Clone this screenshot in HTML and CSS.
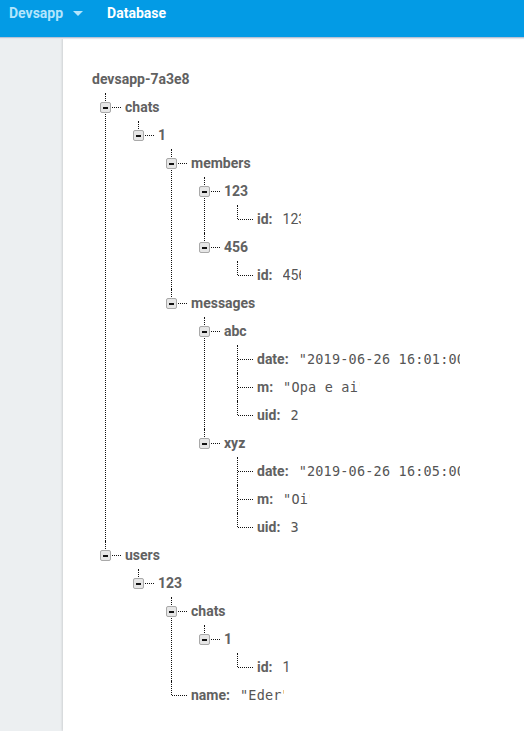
FILE: index.html
```html
<!DOCTYPE html>
<html lang="en">
<head>
    <meta charset="UTF-8">
    <meta name="viewport" content="width=device-width, initial-scale=1.0">
    <title>Devsapp - Database</title>
    <link rel="stylesheet" href="styles.css">
</head>
<body>
    <header class="topbar">
        <span class="project">Devsapp</span>
        <span class="caret"></span>
        <span class="section">Database</span>
    </header>
    <div class="layout">
        <aside class="sidebar"></aside>
        <main class="panel">
            <div class="tree">
                <div class="row root-row"><span class="key">devsapp-7a3e8</span></div>
                <ul>
                    <li>
                        <div class="row"><span class="toggle"></span><span class="key">chats</span></div>
                        <ul>
                            <li>
                                <div class="row"><span class="toggle"></span><span class="key">1</span></div>
                                <ul>
                                    <li>
                                        <div class="row"><span class="toggle"></span><span class="key">members</span></div>
                                        <ul>
                                            <li>
                                                <div class="row"><span class="toggle"></span><span class="key">123</span></div>
                                                <ul>
                                                    <li class="leaf"><div class="row"><span class="key">id:</span><span class="val num"><span>123</span></span></div></li>
                                                </ul>
                                            </li>
                                            <li>
                                                <div class="row"><span class="toggle"></span><span class="key">456</span></div>
                                                <ul>
                                                    <li class="leaf"><div class="row"><span class="key">id:</span><span class="val num"><span>456</span></span></div></li>
                                                </ul>
                                            </li>
                                        </ul>
                                    </li>
                                    <li>
                                        <div class="row"><span class="toggle"></span><span class="key">messages</span></div>
                                        <ul>
                                            <li>
                                                <div class="row"><span class="toggle"></span><span class="key">abc</span></div>
                                                <ul>
                                                    <li class="leaf"><div class="row"><span class="key">date:</span><span class="val str long"><span>"2019-06-26 16:01:00"</span></span></div></li>
                                                    <li class="leaf"><div class="row"><span class="key">m:</span><span class="val str"><span>"Opa e ai"</span></span></div></li>
                                                    <li class="leaf"><div class="row"><span class="key">uid:</span><span class="val str"><span>2&nbsp;</span></span></div></li>
                                                </ul>
                                            </li>
                                            <li>
                                                <div class="row"><span class="toggle"></span><span class="key">xyz</span></div>
                                                <ul>
                                                    <li class="leaf"><div class="row"><span class="key">date:</span><span class="val str long"><span>"2019-06-26 16:05:00"</span></span></div></li>
                                                    <li class="leaf"><div class="row"><span class="key">m:</span><span class="val str"><span>"Oi"</span></span></div></li>
                                                    <li class="leaf"><div class="row"><span class="key">uid:</span><span class="val str"><span>3&nbsp;</span></span></div></li>
                                                </ul>
                                            </li>
                                        </ul>
                                    </li>
                                </ul>
                            </li>
                        </ul>
                    </li>
                    <li>
                        <div class="row"><span class="toggle"></span><span class="key">users</span></div>
                        <ul>
                            <li>
                                <div class="row"><span class="toggle"></span><span class="key">123</span></div>
                                <ul>
                                    <li>
                                        <div class="row"><span class="toggle"></span><span class="key">chats</span></div>
                                        <ul>
                                            <li>
                                                <div class="row"><span class="toggle"></span><span class="key">1</span></div>
                                                <ul>
                                                    <li class="leaf"><div class="row"><span class="key">id:</span><span class="val num"><span>1&nbsp;</span></span></div></li>
                                                </ul>
                                            </li>
                                        </ul>
                                    </li>
                                    <li class="leaf"><div class="row"><span class="key">name:</span><span class="val str"><span>"Eder"</span></span></div></li>
                                </ul>
                            </li>
                        </ul>
                    </li>
                </ul>
            </div>
        </main>
    </div>
</body>
</html>
```

FILE: styles.css
```css
body {
    margin: 0;
    font-family: Roboto, "Liberation Sans", Arial, sans-serif;
    background-color: #eceff1;
}

.topbar {
    height: 37px;
    box-sizing: border-box;
    padding: 5px 0 0 9px;
    background-color: #039be5;
    display: flex;
    align-items: flex-start;
    font-size: 14px;
    font-weight: 700;
    line-height: 16px;
    position: relative;
    z-index: 2;
    box-shadow: 0 1px 0 #b9c3d6, 0 2px 1px #e3e6ea;
}
.project {
    color: #b3e5fc;
}
.caret {
    width: 0;
    height: 0;
    margin: 6px 0 0 10px;
    border-left: 5px solid transparent;
    border-right: 5px solid transparent;
    border-top: 5px solid #b3e5fc;
}
.section {
    color: #ffffff;
    margin-left: 24px;
}

.layout {
    display: flex;
    min-height: calc(100vh - 37px);
}
.sidebar {
    width: 63px;
    flex-shrink: 0;
    background-color: #eceff1;
}
.panel {
    flex: 1;
    background-color: #ffffff;
    box-shadow: -1px 0 2px rgba(0, 0, 0, 0.12);
}

.tree {
    padding: 28px 0 0 4px;
    font-size: 14px;
    color: #616161;
}
.tree ul {
    list-style: none;
    margin: 0;
    padding: 0 0 0 33px;
}
.tree li {
    position: relative;
}
.tree li::before {
    content: "";
    position: absolute;
    left: 5px;
    top: 0;
    bottom: 0;
    border-left: 1px dotted #111;
}
.tree li:last-child::before {
    bottom: auto;
    height: 14px;
}
.tree li::after {
    content: "";
    position: absolute;
    left: 6px;
    top: 14px;
    width: 15px;
    border-top: 1px dotted #111;
}
.row {
    height: 28px;
    display: flex;
    align-items: center;
    padding-left: 25px;
    position: relative;
    white-space: nowrap;
}
.key {
    font-weight: 700;
    color: #616161;
}
.toggle {
    position: absolute;
    left: 0;
    top: 9px;
    width: 9px;
    height: 9px;
    border: 1px solid #a9a9a9;
    border-radius: 2px;
    background-color: #e6e6e6;
    z-index: 1;
}
.toggle::before {
    content: "";
    position: absolute;
    left: 2px;
    top: 4px;
    width: 5px;
    height: 2px;
    background-color: #111;
}
.val {
    display: inline-block;
    overflow: hidden;
    margin-left: 10px;
    color: #555;
}
.val > span {
    margin-right: -5px;
}
.num {
    font-family: Roboto, "Liberation Sans", Arial, sans-serif;
}
.str {
    font-family: "DejaVu Sans Mono", "Liberation Mono", monospace;
    font-size: 13.5px;
    letter-spacing: 0.2px;
}
.str > span {
    margin-right: -6px;
}
.long {
    max-width: 161px;
}
```
